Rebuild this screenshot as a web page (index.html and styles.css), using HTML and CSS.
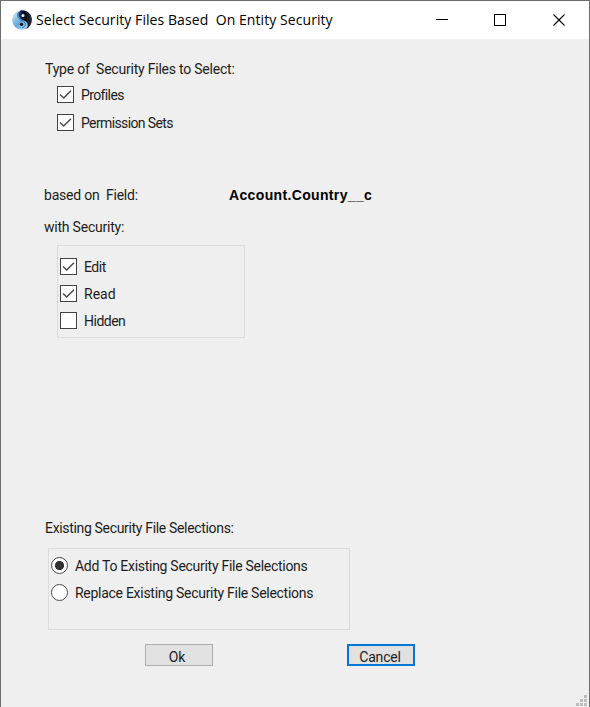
FILE: index.html
```html
<!DOCTYPE html>
<html lang="en">
<head>
<meta charset="utf-8">
<title>Select Security Files Based On Entity Security</title>
<link rel="stylesheet" href="styles.css">
</head>
<body>
<div class="window">
  <header class="titlebar">
    <svg class="logo" width="22" height="22" viewBox="0 0 22 22">
      <defs>
        <linearGradient id="blue" x1="0" y1="0" x2="1" y2="1"><stop offset="0" stop-color="#e2eff8"/><stop offset=".5" stop-color="#66a8dc"/><stop offset="1" stop-color="#cfe4f3"/></linearGradient>
        <linearGradient id="dark" x1="0" y1="0" x2="1" y2="0"><stop offset="0" stop-color="#1a4a85"/><stop offset=".4" stop-color="#05080e"/><stop offset="1" stop-color="#26303c"/></linearGradient>
      </defs>
      <circle cx="11" cy="11" r="9.800" fill="url(#blue)"/>
      <path d="M10 1.200A9.800 9.800 0 0 1 14 20.300C18 18 17.500 12.500 13 11.500C7 10 5.500 4 10 1.200Z" fill="url(#dark)"/>
      <path d="M8 3C5 7 7.500 10 11 11.500C16 13.500 15 18 11 18.500" fill="none" stroke="#2a68ad" stroke-width="1"/>
      <circle cx="12" cy="6.500" r="1.500" fill="#edf6fc"/>
      <circle cx="10.500" cy="15.300" r="1.600" fill="#07101c"/>
    </svg>
    <h1 class="title">Select Security Files Based  On Entity Security</h1>
    <svg class="controls" width="130" height="14" viewBox="0 0 130 14" fill="none" stroke="#000" shape-rendering="crispEdges">
      <path d="M0 5.500H12M58.500 0.500H69.500V11.500H58.500Z"/>
      <path d="M117.500 0.500L128.500 11.500M128.500 0.500L117.500 11.500" shape-rendering="auto" stroke-width="1.100"/>
    </svg>
  </header>
  <main class="content">
    <p class="label type-label">Type of  Security Files to Select:</p>
    <div class="types">
      <div class="option"><span class="box"><svg viewBox="0 0 17 17"><path d="M3 8.500L6.700 12L14 4.700"/></svg></span><span class="t-profiles">Profiles</span></div>
      <div class="option"><span class="box"><svg viewBox="0 0 17 17"><path d="M3 8.500L6.700 12L14 4.700"/></svg></span><span class="t-perm">Permission Sets</span></div>
    </div>
    <div class="field"><span class="label field-label">based on  Field:</span><strong class="field-name">Account.Country__c</strong></div>
    <p class="label security-label">with Security:</p>
    <div class="group security">
      <div class="option"><span class="box"><svg viewBox="0 0 17 17"><path d="M3 8.500L6.700 12L14 4.700"/></svg></span><span class="t-edit">Edit</span></div>
      <div class="option"><span class="box"><svg viewBox="0 0 17 17"><path d="M3 8.500L6.700 12L14 4.700"/></svg></span><span class="t-read">Read</span></div>
      <div class="option"><span class="box"></span><span class="t-hidden">Hidden</span></div>
    </div>
    <p class="label existing-label">Existing Security File Selections:</p>
    <div class="group existing">
      <div class="option"><span class="radio checked"></span><span class="t-add">Add To Existing Security File Selections</span></div>
      <div class="option"><span class="radio"></span><span class="t-replace">Replace Existing Security File Selections</span></div>
    </div>
    <div class="buttons"><button class="button ok">Ok</button><button class="button cancel">Cancel</button></div>
  </main>
  <svg class="grip" width="11" height="11" viewBox="0 0 11 11" fill="#bdbdbd"><path d="M8 0h3v3H8zM4 4h3v3H4zM8 4h3v3H8zM0 8h3v3H0zM4 8h3v3H4zM8 8h3v3H8z"/></svg>
</div>
</body>
</html>
```
FILE: styles.css
```css
* { box-sizing: border-box; }
body { margin: 0; background: #efefef; }
.window {
  position: relative;
  width: 590px;
  height: 707px;
  border: 1px solid #6e6c6c;
  border-bottom: 0;
  background: #efefef;
  font: 14px/20px Roboto, "Liberation Sans", sans-serif;
  color: #1c1c1c;
  letter-spacing: -0.22px;
  overflow: hidden;
}
.titlebar {
  display: flex;
  align-items: center;
  height: 38px;
  padding-left: 10px;
  background: #fff;
}
.logo { flex: none; }
.title {
  width: 403px;
  margin: 0 0 0 3px;
  font: 14px/20px "Open Sans", "Noto Sans", sans-serif;
  letter-spacing: 0.07px;
  white-space: pre;
  color: #000;
}
.controls { flex: none; margin-left: -3px; margin-top: 2px; }
.content { display: flex; flex-direction: column; align-items: flex-start; padding-top: 20px; }
.label { margin: 0 0 0 44px; white-space: pre; }
.types { margin: 6px 0 0 56px; }
.option { display: flex; align-items: center; height: 20px; white-space: nowrap; }
.types .option + .option { margin-top: 8px; }
.t-profiles, .t-perm { letter-spacing: -0.62px; }
.t-edit, .t-hidden { letter-spacing: -0.5px; }
.t-read { letter-spacing: 0; }
.t-add, .t-replace { letter-spacing: -0.28px; }
.box {
  width: 17px;
  height: 17px;
  margin: -2px 7px 0 0;
  border: 1.5px solid #414141;
  background: #fff;
}
.box svg { display: block; width: 17px; height: 17px; margin: -1px; }
.box path { fill: none; stroke: #4a4a4a; stroke-width: 1.5; }
.field { display: flex; margin-top: 52px; }
.field-label { width: 185px; margin-left: 43px; }
.field-name { font: 700 14px/20px "Liberation Sans", sans-serif; letter-spacing: 0.35px; color: #000; }
.security-label { margin: 12px 0 0 43px; }
.group { border: 1px solid #dcdcdc; }
.security { width: 188px; height: 93px; margin: 8px 0 0 56px; padding: 11px 0 0 2px; }
.security .option + .option { margin-top: 7px; }
.existing-label { margin-top: 180px; letter-spacing: -0.33px; }
.existing { width: 302px; height: 82px; margin: 10px 0 0 47px; padding: 7px 0 0 2px; }
.existing .option + .option { margin-top: 7px; }
.radio {
  width: 17px;
  height: 17px;
  margin: -2px 7px 0 0;
  border: 1.5px solid #4a4a4a;
  border-radius: 50%;
  background: #fff;
}
.radio.checked { background: radial-gradient(circle, #333 4.2px, #fff 4.9px); }
.buttons { display: flex; gap: 134px; margin: 14px 0 0 144px; }
.button {
  width: 68px;
  height: 22px;
  padding: 3px 4px 0 0;
  border: 1px solid #adadad;
  background: #e1e1e1;
  font: 14px/18px Roboto, "Liberation Sans", sans-serif;
  letter-spacing: -0.2px;
  color: #1c1c1c;
}
.cancel { border: 2px solid #0078d7; padding: 2px 2px 0 0; }
.grip { position: absolute; right: 2px; bottom: 1px; }
```
